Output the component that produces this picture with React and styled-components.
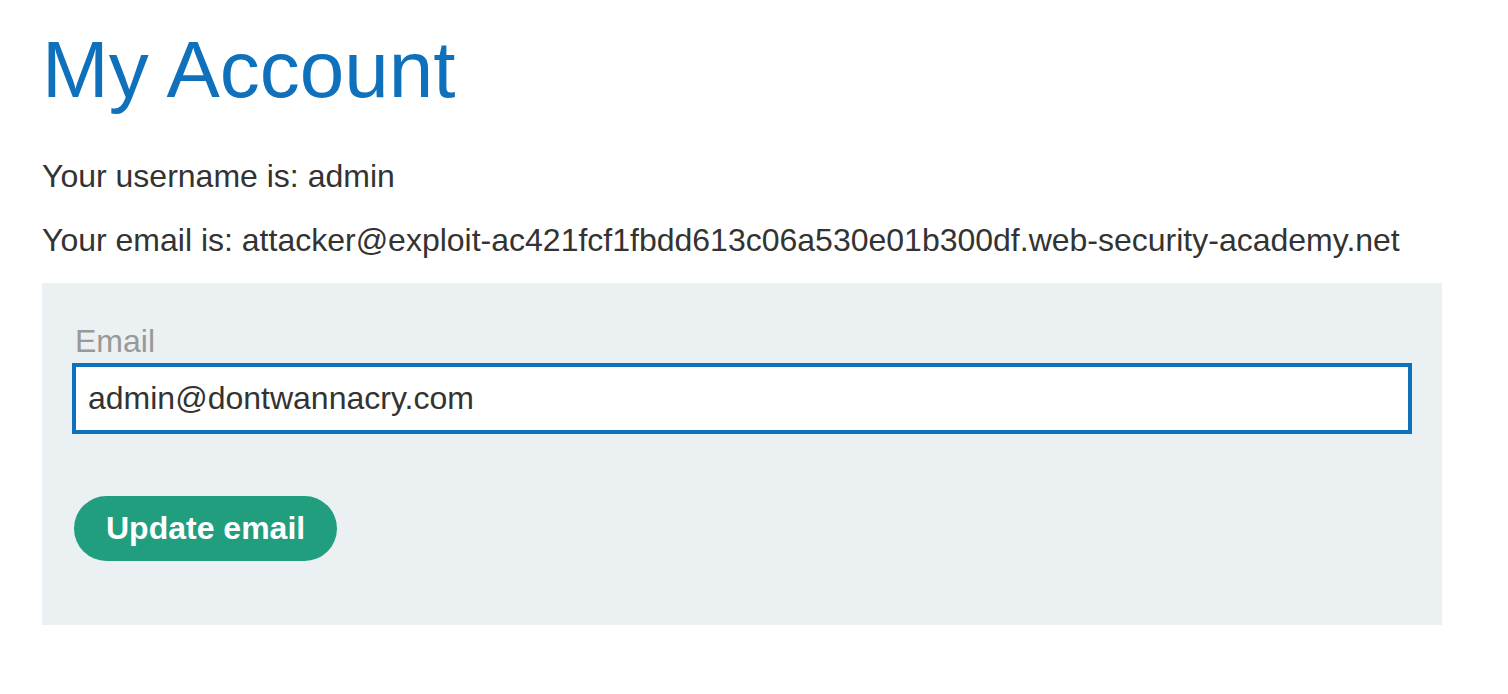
import React from "react";
import styled, { createGlobalStyle } from "styled-components";

const GlobalStyle = createGlobalStyle`
  html, body {
    margin: 0;
    padding: 0;
    background: #fff;
  }
  body {
    font-family: "Liberation Sans", Arial, sans-serif;
    color: #333332;
  }
`;

const Page = styled.div`
  padding: 22px 42px 0 42px;
  width: 1400px;
`;

const Title = styled.h1`
  margin: 0 0 38px 0;
  font-size: 80px;
  line-height: 96px;
  font-weight: 400;
  color: #0f71bb;
`;

const Info = styled.p`
  margin: 0 0 24px 0;
  font-size: 32px;
  line-height: 40px;
`;

const Panel = styled.form`
  margin-top: -1px;
  background: #ebf0f2;
  padding: 38px 30px 64px 30px;
  display: flex;
  flex-direction: column;
  align-items: flex-start;
`;

const Label = styled.label`
  font-size: 32px;
  line-height: 40px;
  color: #999999;
  padding-left: 3px;
  margin-bottom: 2px;
`;

const Input = styled.input`
  box-sizing: border-box;
  width: 100%;
  height: 71px;
  border: 4px solid #0f71bb;
  background: #fff;
  padding: 0 12px;
  font-family: "Liberation Sans", Arial, sans-serif;
  font-size: 32px;
  color: #333332;
  outline: none;
  margin: 0 0 62px 0;
`;

const Button = styled.button`
  margin-left: 2px;
  height: 65px;
  padding: 0 32px;
  border: none;
  border-radius: 33px;
  background: #219e7e;
  color: #fff;
  font-family: "Liberation Sans", Arial, sans-serif;
  font-weight: 700;
  font-size: 32px;
  cursor: pointer;
`;

export default function App() {
  return (
    <>
      <GlobalStyle />
      <Page>
        <Title>My Account</Title>
        <Info>Your username is: admin</Info>
        <Info>
          Your email is:
          attacker@exploit-ac421fcf1fbdd613c06a530e01b300df.web-security-academy.net
        </Info>
        <Panel onSubmit={(e) => e.preventDefault()}>
          <Label htmlFor="email">Email</Label>
          <Input id="email" type="email" defaultValue="admin@dontwannacry.com" />
          <Button type="submit">Update email</Button>
        </Panel>
      </Page>
    </>
  );
}
